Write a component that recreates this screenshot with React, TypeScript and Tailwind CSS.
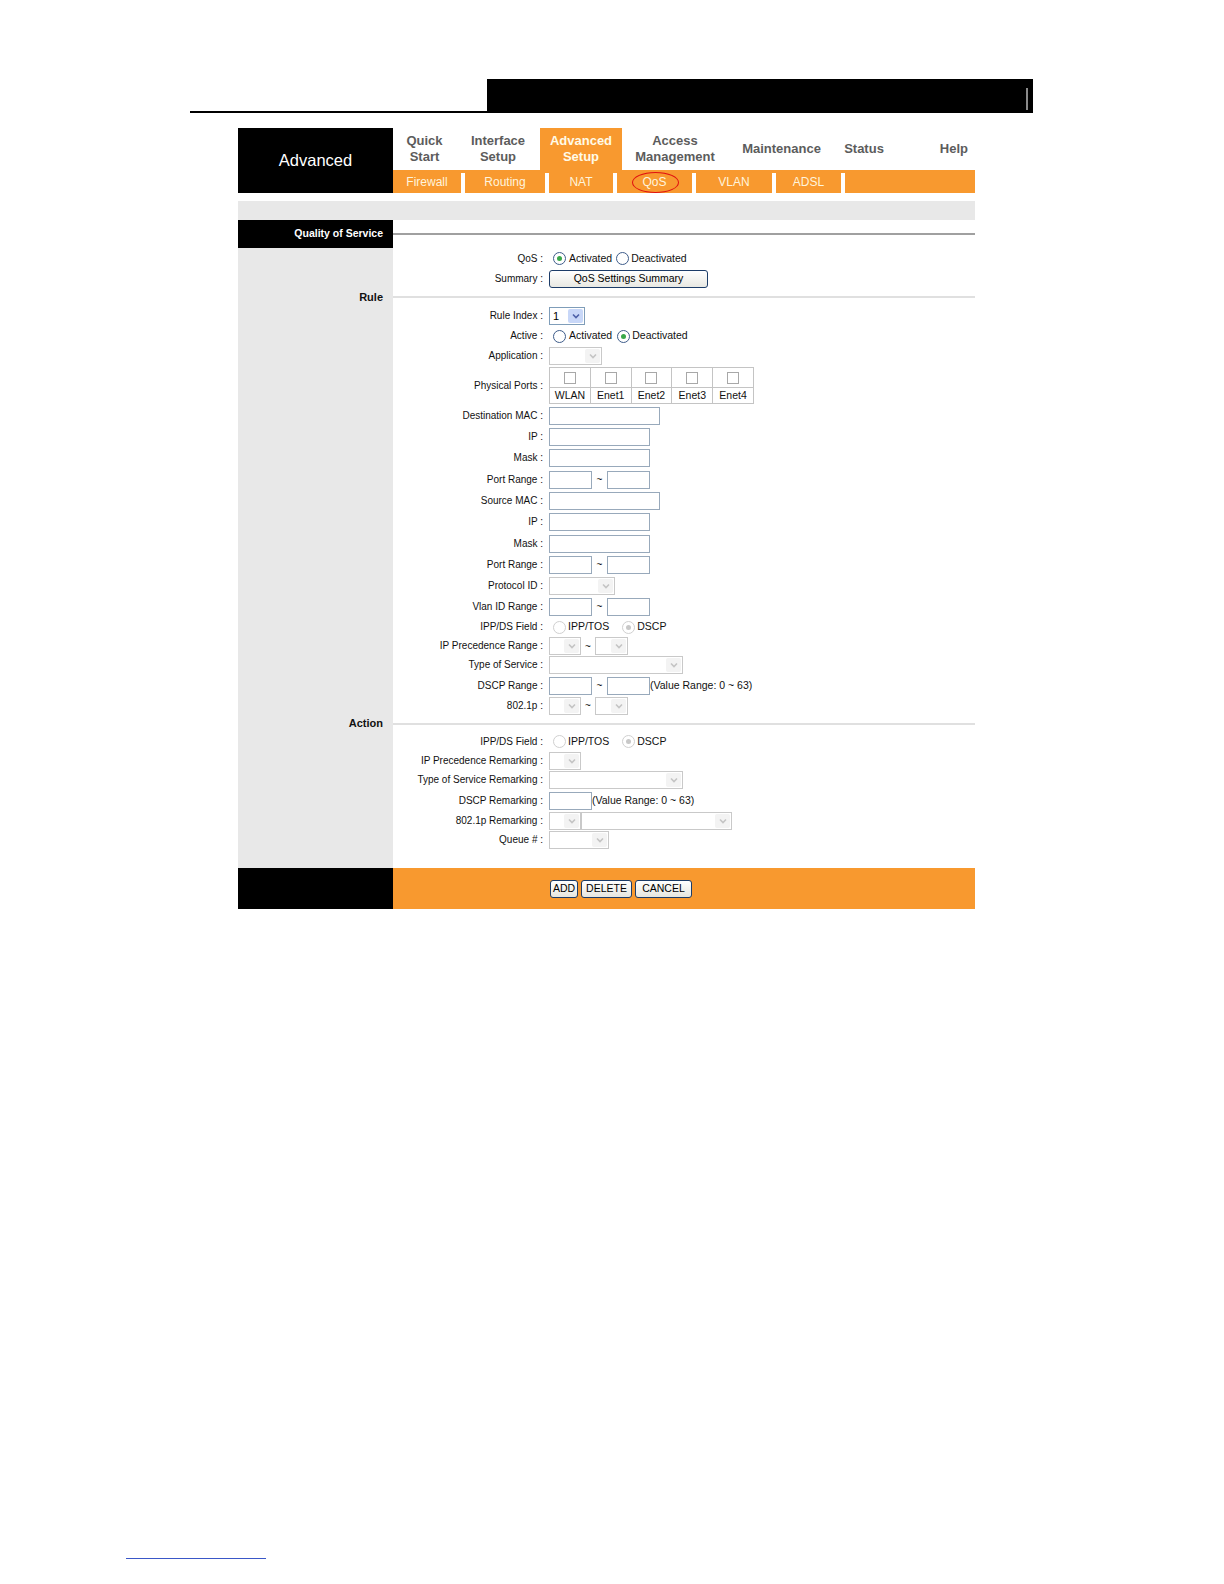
import React from 'react';

const LABEL = 'text-[10px] text-[#111] leading-none';

function Chevron({ color }: { color: string }) {
  return (
    <svg width="8" height="6" viewBox="0 0 8 6">
      <path d="M1 1.5 L4 4.5 L7 1.5" fill="none" stroke={color} strokeWidth="1.6" />
    </svg>
  );
}

function Select({ w, value, enabled }: { w: string; value?: string; enabled?: boolean }) {
  return (
    <div
      className={`flex h-[18px] items-stretch border bg-white ${w} ${
        enabled ? 'border-[#7f9db9]' : 'border-[#c9c9c9]'
      }`}
    >
      <div className="flex flex-1 items-center pl-[3px] text-[11px] text-black">{value}</div>
      <div
        className={`m-[1px] flex w-[15px] items-center justify-center rounded-[2px] ${
          enabled ? 'bg-[#c8d7f8]' : 'bg-[#f3f3f3]'
        }`}
      >
        <Chevron color={enabled ? '#4d61a8' : '#c4c4c4'} />
      </div>
    </div>
  );
}

function Input({ w }: { w: string }) {
  return <div className={`h-[18px] border border-[#98a9bb] bg-white ${w}`} />;
}

function Radio({ checked, disabled }: { checked?: boolean; disabled?: boolean }) {
  return (
    <span
      className={`inline-flex h-[13px] w-[13px] items-center justify-center rounded-full border bg-white ${
        disabled ? 'border-[#d0d0d0]' : 'border-[#3e5c8a]'
      }`}
    >
      {checked && (
        <span
          className={`h-[5px] w-[5px] rounded-full ${disabled ? 'bg-[#c8c8c8]' : 'bg-[#3aa84a]'}`}
        />
      )}
    </span>
  );
}

function Tilde({ w }: { w: string }) {
  return <span className={`${w} text-center text-[10px] text-[#111]`}>~</span>;
}

function Row({ label, h, children }: { label: string; h: string; children?: React.ReactNode }) {
  return (
    <div className={`flex ${h}`}>
      <div className="w-[155px] bg-[#e8e8e8]" />
      <div className="flex flex-1 items-center">
        <div className={`w-[150px] text-right ${LABEL}`}>{label}</div>
        <div className="ml-[6px] flex items-center">{children}</div>
      </div>
    </div>
  );
}

function Section({ title, h }: { title: string; h: string }) {
  return (
    <div className={`flex ${h}`}>
      <div className="flex w-[155px] items-center justify-end bg-[#e8e8e8] pr-[10px] text-[11px] font-bold text-[#111]">
        {title}
      </div>
      <div className="flex flex-1 items-center">
        <div className="h-[2px] w-full bg-[#e0e0e0]" />
      </div>
    </div>
  );
}

function XpButton({ w, children }: { w: string; children: React.ReactNode }) {
  return (
    <div
      className={`flex h-[18px] items-center justify-center rounded-[3px] border border-[#1c3c68] bg-gradient-to-b from-white to-[#e6e6df] text-[10.5px] text-black ${w}`}
    >
      {children}
    </div>
  );
}

const tabs = [
  { l1: 'Quick', l2: 'Start', w: 'w-[63px]' },
  { l1: 'Interface', l2: 'Setup', w: 'w-[84px]' },
  { l1: 'Advanced', l2: 'Setup', w: 'w-[82px]', active: true },
  { l1: 'Access', l2: 'Management', w: 'w-[106px]' },
  { l1: 'Maintenance', w: 'w-[107px]' },
  { l1: 'Status', w: 'w-[58px]' },
];

const subs = [
  { name: 'Firewall', w: 'w-[68px]' },
  { name: 'Routing', w: 'w-[80px]' },
  { name: 'NAT', w: 'w-[64px]' },
  { name: 'QoS', w: 'w-[75px]', circled: true },
  { name: 'VLAN', w: 'w-[76px]' },
  { name: 'ADSL', w: 'w-[65px]' },
];

const ports = ['WLAN', 'Enet1', 'Enet2', 'Enet3', 'Enet4'];

export default function App() {
  return (
    <div className="relative h-[1584px] w-[1224px] bg-white" style={{ fontFamily: '"Liberation Sans", Arial, sans-serif' }}>
      {/* top banner */}
      <div className="flex pt-[79px]">
        <div className="ml-[190px] flex w-[297px] items-end">
          <div className="h-[2px] w-full bg-black" />
        </div>
        <div className="relative h-[34px] w-[546px] bg-black">
          <div className="absolute right-[5px] top-[9px] h-[22px] w-[2px] bg-[#8a8a8a]" />
        </div>
      </div>

      {/* header */}
      <div className="ml-[238px] mt-[15px] w-[737px]">
        <div className="flex h-[65px]">
          <div className="flex w-[155px] items-center justify-center bg-black pb-[1px] text-[16.5px] text-white">
            Advanced
          </div>
          <div className="flex flex-1 flex-col">
            <div className="flex h-[42px]">
              {tabs.map((t) => (
                <div
                  key={t.l1}
                  className={`flex flex-col items-center justify-center text-[13px] font-bold leading-[16px] ${t.w} ${
                    t.active ? 'bg-[#f8992f] text-[#fffbe8]' : 'text-[#5c5c5c]'
                  }`}
                >
                  <span>{t.l1}</span>
                  {t.l2 && <span>{t.l2}</span>}
                </div>
              ))}
              <div className="flex flex-1 items-center justify-end pr-[7px] text-[13px] font-bold text-[#5c5c5c]">
                Help
              </div>
            </div>
            <div className="flex h-[23px] bg-[#f8992f]">
              {subs.map((s) => (
                <React.Fragment key={s.name}>
                  <div className={`relative flex items-center justify-center text-[12px] text-[#fff4dc] ${s.w}`}>
                    {s.name}
                    {s.circled && (
                      <div className="absolute left-[15px] top-[2px] h-[21px] w-[47px] rounded-[50%] border-[1.5px] border-[#e01010]" />
                    )}
                  </div>
                  <div className="mt-[3px] w-[4px] bg-white" />
                </React.Fragment>
              ))}
            </div>
          </div>
        </div>

        <div className="mt-[8px] h-[19px] bg-[#e8e8e8]" />

        {/* Quality of Service title */}
        <div className="flex h-[28px]">
          <div className="flex w-[155px] items-center justify-end bg-black pr-[10px] text-[10.5px] font-bold text-white">
            Quality of Service
          </div>
          <div className="flex flex-1 items-center">
            <div className="h-[2px] w-full bg-[#a0a0a0]" />
          </div>
        </div>

        <Row label="QoS :" h="h-[21px]">
          <div className="ml-[4px] flex items-center text-[10.5px] text-[#111]">
            <Radio checked />
            <span className="ml-[3px]">Activated</span>
            <span className="ml-[4px] flex">
              <Radio />
            </span>
            <span className="ml-[2px]">Deactivated</span>
          </div>
        </Row>
        <Row label="Summary :" h="h-[19px]">
          <div className="flex h-[18px] w-[159px] items-center justify-center rounded-[3px] border border-[#1c3c68] bg-gradient-to-b from-white to-[#e8e8e2] text-[10.5px] text-black">
            QoS Settings Summary
          </div>
        </Row>

        <Section title="Rule" h="h-[18px]" />

        <Row label="Rule Index :" h="h-[20px]">
          <Select w="w-[36px]" value="1" enabled />
        </Row>
        <Row label="Active :" h="h-[20px]">
          <div className="ml-[4px] flex items-center text-[10.5px] text-[#111]">
            <Radio />
            <span className="ml-[3px]">Activated</span>
            <span className="ml-[5px] flex">
              <Radio checked />
            </span>
            <span className="ml-[2px]">Deactivated</span>
          </div>
        </Row>
        <Row label="Application :" h="h-[19px]">
          <Select w="w-[53px]" />
        </Row>
        <Row label="Physical Ports :" h="h-[41px]">
          <div className="w-[205px] border border-[#c4c4c4]">
            <div className="flex h-[19px]">
              {ports.map((p, i) => (
                <div
                  key={p}
                  className={`flex flex-1 items-center justify-center ${i > 0 ? 'border-l border-[#c4c4c4]' : ''}`}
                >
                  <div className="h-[12px] w-[12px] border border-[#a8a8a8] bg-white" />
                </div>
              ))}
            </div>
            <div className="flex h-[16px] border-t border-[#c4c4c4]">
              {ports.map((p, i) => (
                <div
                  key={p}
                  className={`flex flex-1 items-center justify-center text-[10.5px] text-[#111] ${
                    i > 0 ? 'border-l border-[#c4c4c4]' : ''
                  }`}
                >
                  {p}
                </div>
              ))}
            </div>
          </div>
        </Row>
        <Row label="Destination MAC :" h="h-[20px]">
          <Input w="w-[111px]" />
        </Row>
        <Row label="IP :" h="h-[21px]">
          <Input w="w-[101px]" />
        </Row>
        <Row label="Mask :" h="h-[22px]">
          <Input w="w-[101px]" />
        </Row>
        <Row label="Port Range :" h="h-[21px]">
          <Input w="w-[43px]" />
          <Tilde w="w-[15px]" />
          <Input w="w-[43px]" />
        </Row>
        <Row label="Source MAC :" h="h-[21px]">
          <Input w="w-[111px]" />
        </Row>
        <Row label="IP :" h="h-[22px]">
          <Input w="w-[101px]" />
        </Row>
        <Row label="Mask :" h="h-[21px]">
          <Input w="w-[101px]" />
        </Row>
        <Row label="Port Range :" h="h-[21px]">
          <Input w="w-[43px]" />
          <Tilde w="w-[15px]" />
          <Input w="w-[43px]" />
        </Row>
        <Row label="Protocol ID :" h="h-[21px]">
          <Select w="w-[66px]" />
        </Row>
        <Row label="Vlan ID Range :" h="h-[21px]">
          <Input w="w-[43px]" />
          <Tilde w="w-[15px]" />
          <Input w="w-[43px]" />
        </Row>
        <Row label="IPP/DS Field :" h="h-[20px]">
          <div className="ml-[4px] flex items-center text-[10.5px] text-[#111]">
            <Radio disabled />
            <span className="ml-[2px]">IPP/TOS</span>
            <span className="ml-[13px] flex">
              <Radio checked disabled />
            </span>
            <span className="ml-[2px]">DSCP</span>
          </div>
        </Row>
        <Row label="IP Precedence Range :" h="h-[18px]">
          <Select w="w-[32px]" />
          <Tilde w="w-[14px]" />
          <Select w="w-[33px]" />
        </Row>
        <Row label="Type of Service :" h="h-[20px]">
          <Select w="w-[134px]" />
        </Row>
        <Row label="DSCP Range :" h="h-[21px]">
          <Input w="w-[43px]" />
          <Tilde w="w-[15px]" />
          <Input w="w-[43px]" />
          <span className="text-[10.5px] text-[#111]">(Value Range: 0 ~ 63)</span>
        </Row>
        <Row label="802.1p :" h="h-[19px]">
          <Select w="w-[32px]" />
          <Tilde w="w-[14px]" />
          <Select w="w-[33px]" />
        </Row>

        <Section title="Action" h="h-[17px]" />

        <Row label="IPP/DS Field :" h="h-[19px]">
          <div className="ml-[4px] flex items-center text-[10.5px] text-[#111]">
            <Radio disabled />
            <span className="ml-[2px]">IPP/TOS</span>
            <span className="ml-[13px] flex">
              <Radio checked disabled />
            </span>
            <span className="ml-[2px]">DSCP</span>
          </div>
        </Row>
        <Row label="IP Precedence Remarking :" h="h-[19px]">
          <Select w="w-[32px]" />
        </Row>
        <Row label="Type of Service Remarking :" h="h-[20px]">
          <Select w="w-[134px]" />
        </Row>
        <Row label="DSCP Remarking :" h="h-[21px]">
          <Input w="w-[43px]" />
          <span className="text-[10.5px] text-[#111]">(Value Range: 0 ~ 63)</span>
        </Row>
        <Row label="802.1p Remarking :" h="h-[19px]">
          <Select w="w-[32px]" />
          <Select w="w-[151px]" />
        </Row>
        <Row label="Queue # :" h="h-[20px]">
          <Select w="w-[60px]" />
        </Row>
        <Row label="" h="h-[18px]" />

        {/* footer buttons */}
        <div className="flex h-[41px]">
          <div className="w-[155px] bg-black" />
          <div className="flex flex-1 items-center bg-[#f8992f] pl-[157px]">
            <XpButton w="w-[28px]">ADD</XpButton>
            <div className="ml-[3px]">
              <XpButton w="w-[51px]">DELETE</XpButton>
            </div>
            <div className="ml-[3px]">
              <XpButton w="w-[57px]">CANCEL</XpButton>
            </div>
          </div>
        </div>
      </div>

      <div className="absolute left-[126px] top-[1558px] h-[1px] w-[140px] bg-[#3a57c8]" />
    </div>
  );
}
